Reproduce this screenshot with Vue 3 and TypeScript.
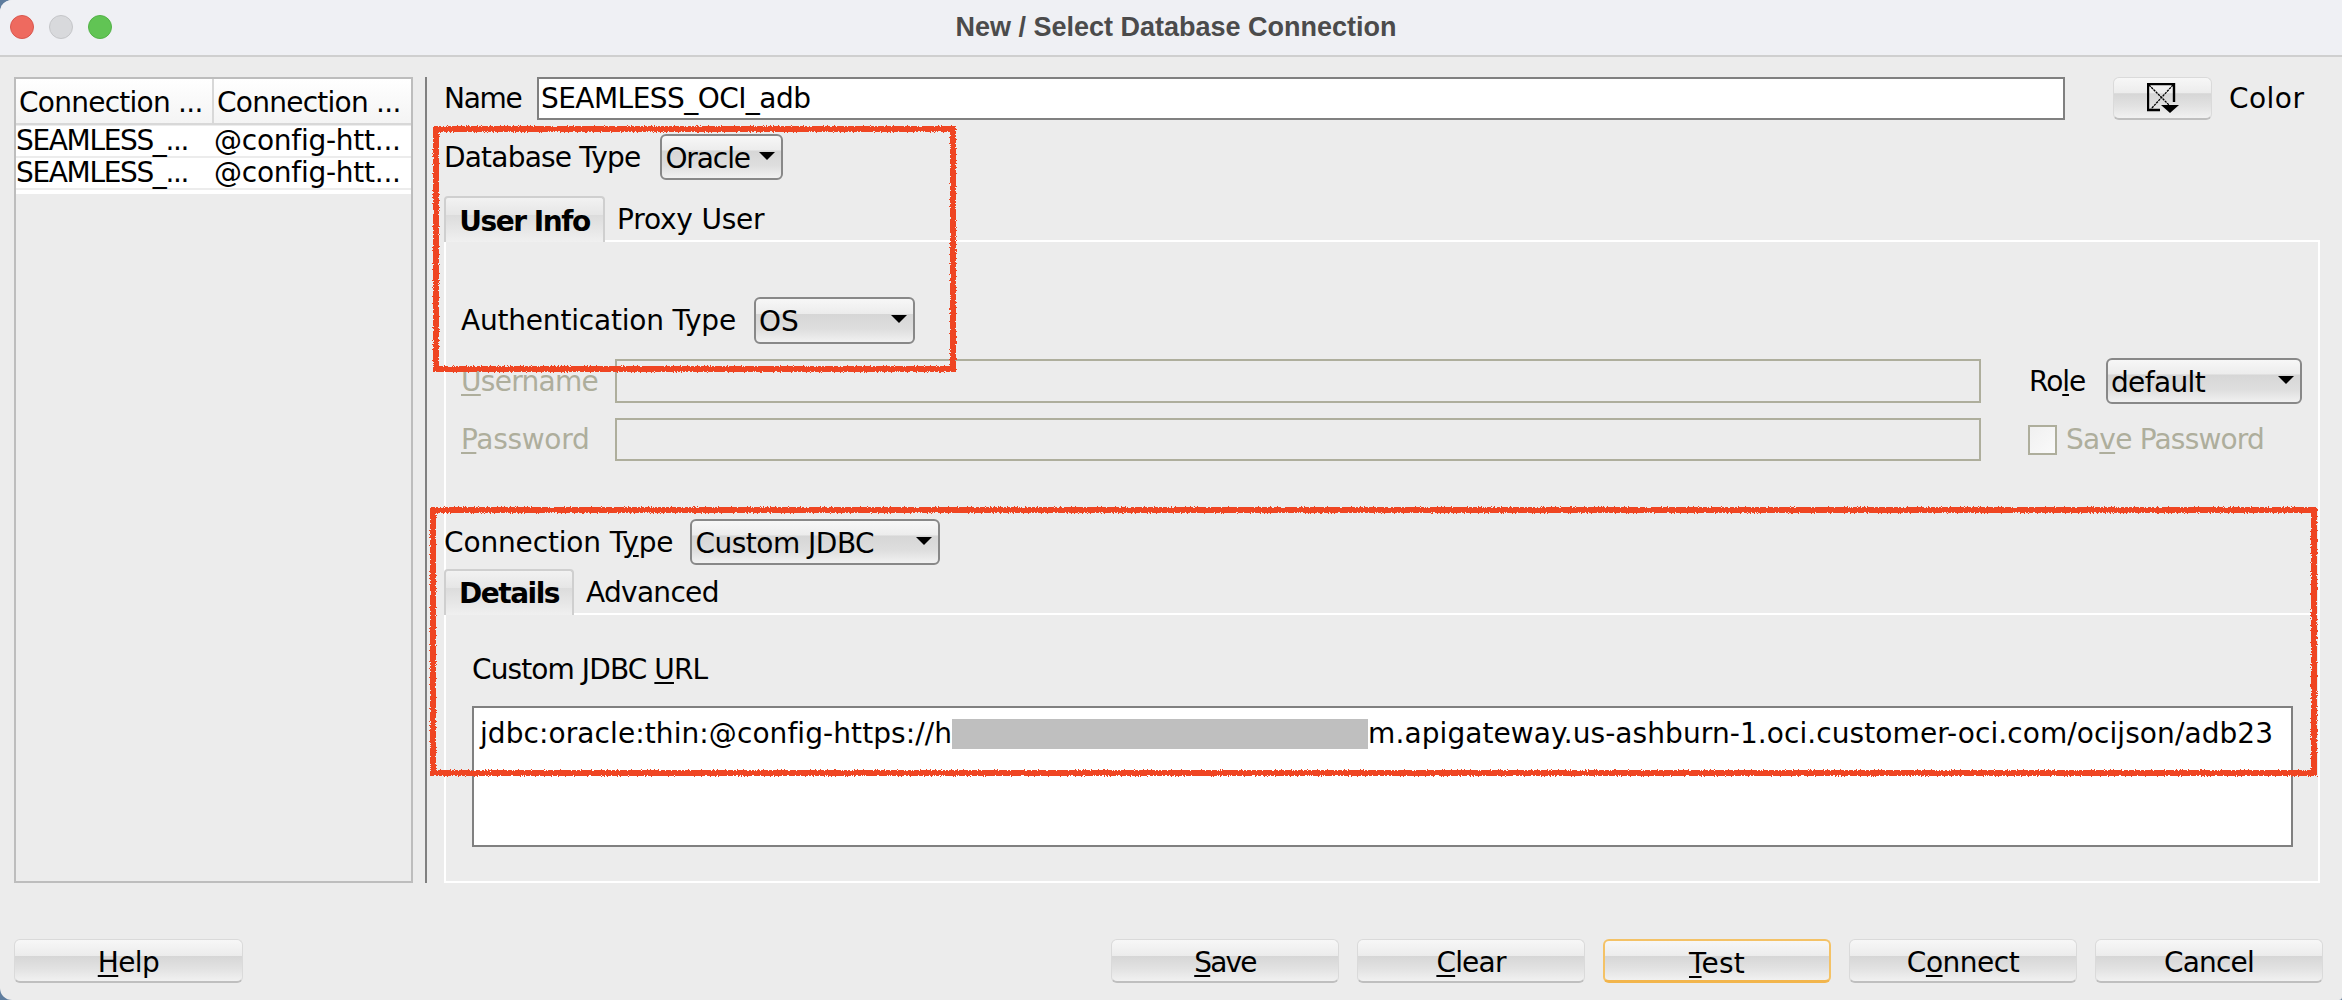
<script setup lang="ts">
const rows = [
  { name: 'SEAMLESS_...', url: '@config-htt...' },
  { name: 'SEAMLESS_...', url: '@config-htt...' },
]
const actions = [
  { pre: '', key: 'S', post: 'ave', cls: 'act-save' },
  { pre: '', key: 'C', post: 'lear', cls: 'act-clear' },
  { pre: '', key: 'T', post: 'est', cls: 'act-test focus' },
  { pre: 'C', key: 'o', post: 'nnect', cls: 'act-connect' },
  { pre: 'Cancel', key: '', post: '', cls: 'act-cancel' },
]
</script>

<template>
  <div class="window">
    <header class="titlebar">
      <span class="light red"></span>
      <span class="light gray"></span>
      <span class="light green"></span>
      <span class="title">New / Select Database Connection</span>
    </header>

    <main class="body">
      <aside class="list">
        <div class="thead">
          <span class="th first">Connection ...</span>
          <span class="th">Connection ...</span>
        </div>
        <div v-for="(r, i) in rows" :key="i" class="tr">
          <span class="td first">{{ r.name }}</span>
          <span class="td second">{{ r.url }}</span>
        </div>
        <div class="tail"></div>
      </aside>

      <div class="splitter"></div>

      <section class="form">
        <div class="name-row">
          <label class="name-label">Name</label>
          <div class="field name-field">SEAMLESS_OCI_adb</div>
          <button class="aqua color-btn">
            <svg class="color-icon" width="32" height="30" viewBox="0 0 32 30">
              <path d="M13 27H1V1H27V19" fill="none" stroke="#000" stroke-width="2.4"/>
              <path d="M2 2L26 26M26 2L4 26" fill="none" stroke="#000" stroke-width="1.3" stroke-dasharray="2.4 0.8"/>
              <path d="M14 22H32L23 30Z" fill="#000"/>
            </svg>
          </button>
          <span class="color-label">Color</span>
        </div>

        <div class="dbtype-row">
          <span class="ls-dbtype">Database Type</span>
          <div class="combo combo-oracle">Oracle<i class="caret"></i></div>
        </div>

        <div class="tabstrip strip-user">
          <div class="tab tab-user">User Info</div>
          <div class="tab-off proxy">Proxy User</div>
        </div>

        <div class="panel">
          <div class="auth-row">
            <span class="ls-auth">Authentication Type</span>
            <div class="combo combo-auth">OS<i class="caret"></i></div>
          </div>

          <div class="cred-grid">
            <span class="off ls-user"><u>U</u>sername</span>
            <div class="field-off"></div>
            <span class="role-label"><span class="ls-role">Ro<u>l</u>e</span></span>
            <div class="combo combo-role">default<i class="caret"></i></div>

            <span class="off ls-pass"><u>P</u>assword</span>
            <div class="field-off"></div>
            <span class="save">
              <i class="check"></i>
              <span class="off ls-save">Sa<u>v</u>e Password</span>
            </span>
          </div>

          <div class="conn-row">
            <span class="ls-conn">Connection T<u>y</u>pe</span>
            <div class="combo combo-conn">Custom JDBC<i class="caret"></i></div>
          </div>

          <div class="tabstrip strip-details">
            <div class="tab tab-details">Details</div>
            <div class="tab-off advanced">Advanced</div>
          </div>

          <div class="url-label">Custom JDBC <u>U</u>RL</div>
          <div class="urlbox">
            <span>jdbc:oracle:thin:@config-https://h</span><span class="redact"></span><span>m.apigateway.us-ashburn-1.oci.customer-oci.com/ocijson/adb23</span>
          </div>
        </div>
      </section>
    </main>

    <footer class="footer">
      <button class="aqua action help"><u>H</u>elp</button>
      <div class="actions">
        <button v-for="a in actions" :key="a.cls" class="aqua action" :class="a.cls">{{ a.pre }}<u>{{ a.key }}</u>{{ a.post }}</button>
      </div>
    </footer>

    <svg class="defs" width="0" height="0" aria-hidden="true">
      <filter id="rough" x="-2%" y="-5%" width="104%" height="110%">
        <feTurbulence type="fractalNoise" baseFrequency="0.7" numOctaves="2" seed="4" result="n"/>
        <feDisplacementMap in="SourceGraphic" in2="n" scale="4"/>
      </filter>
    </svg>
    <div class="mark mark-a"></div>
    <div class="mark mark-b"></div>
  </div>
</template>

<style>
html, body { margin: 0; background: #5f7d9e; }
</style>

<style scoped>
.window {
  position: relative;
  width: 2342px;
  height: 1000px;
  box-sizing: border-box;
  overflow: hidden;
  border-radius: 12px 0 3px 12px;
  background: #ececec;
  color: #000;
  font-family: "DejaVu Sans", sans-serif;
  font-size: 28px;
  display: flex;
  flex-direction: column;
}
u { text-underline-offset: 3px; text-decoration-thickness: 2px; }
.defs { position: absolute; }

.titlebar {
  flex: none;
  height: 57px;
  box-sizing: border-box;
  background: #eff0f4;
  border-bottom: 2px solid #cfcfcf;
  display: flex;
  align-items: center;
  padding: 0 0 2px 10px;
  gap: 15px;
  position: relative;
}
.light { width: 24px; height: 24px; border-radius: 50%; box-sizing: border-box; }
.red { background: #ee6a5f; border: 1px solid #d9574e; }
.gray { background: #d8d9dc; border: 1px solid #c5c6c9; }
.green { background: #61c454; border: 1px solid #53b247; }
.title {
  position: absolute;
  left: 10px;
  right: 0;
  top: 12px;
  text-align: center;
  font-family: "Liberation Sans", sans-serif;
  font-weight: 700;
  font-size: 27px;
  color: #4b4b4b;
}

.body {
  flex: none;
  height: 806px;
  margin-top: 20px;
  padding-left: 14px;
  display: flex;
}
.list {
  width: 399px;
  box-sizing: border-box;
  border: 2px solid #bdbdbd;
  display: flex;
  flex-direction: column;
}
.thead {
  display: flex;
  height: 44px;
  background: linear-gradient(#fff, #f4f4f4);
  border-bottom: 2px solid #d8d8d8;
  margin-bottom: 1px;
}
.th {
  width: 197px;
  padding-left: 3px;
  box-sizing: border-box;
  line-height: 47px;
  white-space: nowrap;
  letter-spacing: -0.75px;
}
.th.first { border-right: 2px solid #d8d8d8; width: 198px; }
.tr {
  display: flex;
  height: 30px;
  background: #fff;
  margin-bottom: 2px;
  line-height: 30px;
}
.td { width: 197px; box-sizing: border-box; white-space: nowrap; }
.td.first { width: 198px; letter-spacing: -1.35px; }
.td.second { letter-spacing: -0.25px; }
.tail { height: 4px; background: #fff; }

.splitter {
  width: 2px;
  background: #808080;
  margin-left: 12px;
}

.form {
  flex: none;
  width: 1897px;
  margin-left: 17px;
  display: flex;
  flex-direction: column;
}
.name-row {
  display: flex;
  align-items: center;
  height: 43px;
}
.name-label { width: 93px; letter-spacing: -1.3px; }
.field {
  box-sizing: border-box;
  height: 43px;
  background: #fff;
  border: 2px solid #808080;
  line-height: 39px;
  padding-left: 2px;
  letter-spacing: -0.55px;
}
.name-field { width: 1528px; }
.color-btn {
  width: 99px;
  height: 43px;
  margin-left: 48px;
  display: flex;
  align-items: center;
  justify-content: center;
}
.color-icon { display: block; }
.color-label { margin-left: 17px; letter-spacing: 0.45px; }

.aqua {
  font: inherit;
  color: #000;
  box-sizing: border-box;
  border: 1px solid #dadada;
  border-bottom: 2px solid #bfbfbf;
  border-radius: 6px;
  background: linear-gradient(#f7f7f7 0, #ececec 38%, #d6d6d6 39%, #e2e2e2 70%, #f1f1f1 100%);
  padding: 0;
}

.combo {
  box-sizing: border-box;
  height: 46px;
  border: 2px solid #888;
  border-radius: 6px;
  background: linear-gradient(#f7f7f7 0, #ececec 34%, #d6d6d6 35%, #dedede 70%, #f1f1f1 100%);
  line-height: 46px;
  padding-left: 3px;
  position: relative;
  white-space: nowrap;
}
.caret {
  position: absolute;
  top: 16px;
  right: 6px;
  width: 0;
  height: 0;
  border-left: 8px solid transparent;
  border-right: 8px solid transparent;
  border-top: 8px solid #000;
}

.dbtype-row {
  display: flex;
  align-items: center;
  margin-top: 14px;
  height: 46px;
}
.ls-dbtype { letter-spacing: -0.8px; }
.combo-oracle { width: 123px; margin-left: 20px; letter-spacing: -1.1px; }

.tabstrip {
  display: flex;
  align-items: flex-end;
  height: 46px;
}
.strip-user { margin-top: 16px; width: 1876px; }
.tab {
  box-sizing: border-box;
  height: 46px;
  border: 2px solid #cfcfcf;
  border-bottom: none;
  border-radius: 4px 4px 0 0;
  background: linear-gradient(#f2f2f2 0, #e6e6e6 38%, #dcdcdc 39%, #e6e6e6 70%, #f0f0f0 100%);
  font-weight: 700;
  text-align: center;
  line-height: 47px;
}
.tab-user { width: 161px; letter-spacing: -1.45px; }
.tab-details { width: 130px; letter-spacing: -1.5px; line-height: 46px; }
.tab-off {
  flex: 1;
  box-sizing: border-box;
  height: 46px;
  line-height: 48px;
  border-bottom: 2px solid #fff;
  padding-left: 12px;
}
.proxy { letter-spacing: -0.2px; }
.advanced { letter-spacing: -0.7px; }

.panel {
  flex: 1;
  box-sizing: border-box;
  width: 1876px;
  border: solid #fff;
  border-width: 0 2px 2px 2px;
  padding-top: 55px;
  display: flex;
  flex-direction: column;
}
.auth-row {
  display: flex;
  align-items: center;
  height: 47px;
  padding-left: 15px;
}
.ls-auth { letter-spacing: -0.2px; }
.combo-auth { width: 161px; height: 47px; margin-left: 18px; }

.cred-grid {
  display: grid;
  grid-template-columns: 154px 1366px 125px 196px;
  grid-template-rows: 44px 43px;
  row-gap: 15px;
  align-items: center;
  padding-left: 15px;
  margin-top: 15px;
}
.off { color: #aeae9c; }
.ls-user { letter-spacing: -0.7px; }
.ls-pass { letter-spacing: -0.3px; }
.ls-role { letter-spacing: -1.05px; }
.ls-save { letter-spacing: -0.8px; }
.field-off {
  box-sizing: border-box;
  height: 100%;
  border: 2px solid #aeae9c;
}
.role-label { padding-left: 48px; }
.combo-role { width: 196px; letter-spacing: -0.65px; }
.save {
  grid-column: 3 / 5;
  display: flex;
  align-items: center;
  gap: 9px;
  padding-left: 47px;
}
.check {
  width: 29px;
  height: 30px;
  box-sizing: border-box;
  border: 2px solid #aeae9c;
  background: linear-gradient(135deg, #f0f0f0, #fafafa);
}

.conn-row {
  display: flex;
  align-items: center;
  height: 46px;
  margin-top: 58px;
  margin-left: -2px;
}
.ls-conn { letter-spacing: -0.15px; }
.combo-conn { width: 250px; margin-left: 17px; letter-spacing: -0.5px; }

.strip-details {
  margin-top: 4px;
  margin-left: -2px;
  width: 1876px;
}
.url-label {
  margin-top: 38px;
  padding-left: 26px;
  line-height: 34px;
  letter-spacing: -0.9px;
}
.urlbox {
  box-sizing: border-box;
  width: 1821px;
  height: 141px;
  margin: 19px 0 0 26px;
  border: 2px solid #808080;
  background: #fff;
  padding: 11px 0 0 6px;
  white-space: nowrap;
  line-height: 30px;
  display: flex;
  letter-spacing: 0.08px;
}
.redact {
  flex: none;
  display: block;
  width: 416px;
  height: 30px;
  background: #bfbfbf;
}

.footer {
  flex: none;
  margin-top: 56px;
  height: 44px;
  padding: 0 19px 0 14px;
  display: flex;
  justify-content: space-between;
}
.actions { display: flex; gap: 18px; }
.action { width: 228px; height: 44px; line-height: 46px; text-align: center; }
.help { width: 229px; letter-spacing: -0.6px; }
.act-save { letter-spacing: -1.8px; }
.act-clear { letter-spacing: -0.8px; }
.act-test { letter-spacing: 0.2px; }
.act-connect { letter-spacing: -0.5px; }
.act-cancel { letter-spacing: -0.8px; }
.focus {
  border: 2px solid #f4c266;
  border-bottom: 3px solid #f2b54c;
}

.mark {
  position: absolute;
  box-sizing: border-box;
  border: 6px solid #ef4423;
  pointer-events: none;
  filter: url(#rough);
}
.mark-a { left: 433px; top: 126px; width: 523px; height: 246px; }
.mark-b { left: 430px; top: 507px; width: 1887px; height: 269px; }
</style>
